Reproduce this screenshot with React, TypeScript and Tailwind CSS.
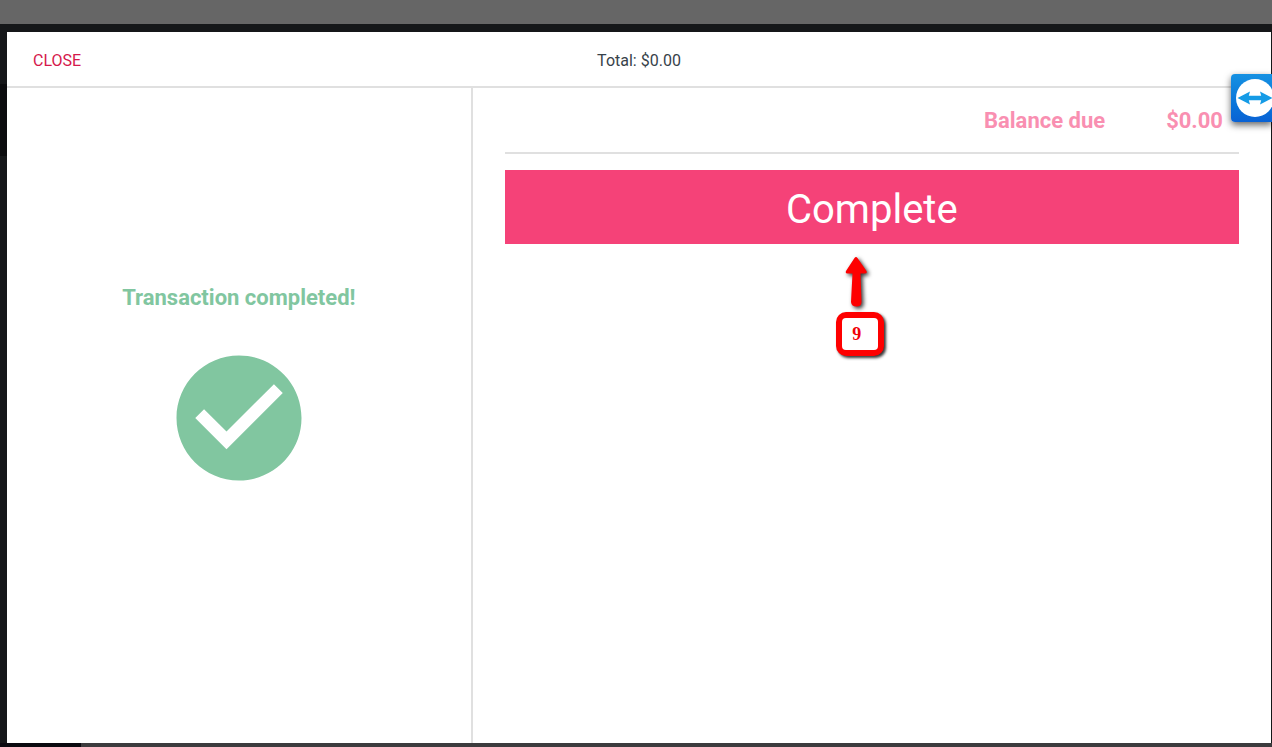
function CheckCircle() {
  return (
    <svg viewBox="0 0 24 24" className="h-[150px] w-[150px] fill-[#81c6a0]" aria-hidden="true">
      <path d="M12 2C6.48 2 2 6.48 2 12s4.48 10 10 10 10-4.48 10-10S17.52 2 12 2zm-2 15l-5-5 1.41-1.41L10 14.17l7.59-7.59L19 8l-9 9z" />
    </svg>
  );
}

function StepMarker({ step }: { step: number }) {
  return (
    <div className="flex flex-col items-center">
      <svg viewBox="0 0 30 56" className="mr-2 h-14 w-[30px] overflow-visible drop-shadow-[2px_2px_2px_rgba(0,0,0,0.8)]" aria-hidden="true">
        <path
          d="M13.500 2Q15 .2 16.500 2L25.500 15q1 2.500-1.500 2.500H19.500L20.500 46q0 4.500-5 4.500T10 46L11.500 17.500H6.500Q4 17.500 5 15z"
          fill="#fe0000"
        />
      </svg>
      <div className="flex h-11 w-12 items-center justify-center rounded-[10px] bg-[#fe0000] shadow-[2px_2px_3px_rgba(0,0,0,0.8)]">
        <div className="flex h-8 w-9 items-center justify-center rounded-[4px] bg-white pr-1.5 font-['Liberation_Serif',serif] text-lg font-bold text-[#f00008]">
          {step}
        </div>
      </div>
    </div>
  );
}

function RemoteBadge() {
  return (
    <div className="absolute top-[42px] -right-px h-12 w-[41px] overflow-hidden rounded-l-sm bg-linear-to-b from-[#1691e2] to-[#0a62d4] shadow-[0_3px_7px_rgba(0,0,0,0.6)]">
      <svg viewBox="0 0 48 48" className="h-12 w-12" aria-hidden="true">
        <circle cx="24" cy="24" r="19" fill="#fff" />
        <path d="M6.500 24l12.500-6.500-1.200 4.300h12.400L29 17.500 41.500 24 29 30.500l1.200-4.300H17.800l1.200 4.300z" fill="#159be6" />
      </svg>
    </div>
  );
}

export default function App() {
  return (
    <div className="flex min-h-screen flex-col bg-[#151719] font-[Roboto,sans-serif]">
      <div className="h-6 bg-[#666666]" />

      <div className="flex flex-1 flex-col pt-2">
        <div className="flex flex-1">
          <div className="w-[7px] pt-[52px]">
            <div className="h-18 bg-[#0b0c0e]" />
          </div>

          <div className="relative mr-px flex flex-1 flex-col bg-white">
            {/* Header */}
            <header className="grid h-14 grid-cols-3 items-center border-b-2 border-[#e0e0e0] px-[26px] pt-1 text-base">
              <button type="button" className="justify-self-start text-[#d5184b]">
                CLOSE
              </button>
              <h1 className="text-center text-[#37424a]">Total: $0.00</h1>
            </header>

            <main className="grid flex-1 grid-cols-[7fr_12fr]">
              {/* Status */}
              <section className="flex flex-col items-center gap-[29px] border-r-2 border-[#e0e0e0] pt-[194px]">
                <p className="text-[22px] leading-8 font-bold text-[#81c6a0]">Transaction completed!</p>
                <CheckCircle />
              </section>

              {/* Payment */}
              <section className="px-8">
                <div className="flex h-[66px] items-center justify-end gap-[61px] border-b-2 border-[#e0e0e0] pr-4 text-[22px] font-bold text-[#f98fb1]">
                  <span>Balance due</span>
                  <span>$0.00</span>
                </div>
                <button type="button" className="mt-4 h-[74px] w-full bg-[#f54278] pt-1.5 text-[40px] text-white">
                  Complete
                </button>
                <div className="flex justify-center pt-3 pr-6">
                  <StepMarker step={9} />
                </div>
              </section>
            </main>

            <RemoteBadge />
          </div>
        </div>

        <div className="flex h-1">
          <div className="w-[81px] bg-[#0a090f]" />
          <div className="flex-1 bg-[#3c3b3d]" />
        </div>
      </div>
    </div>
  );
}
